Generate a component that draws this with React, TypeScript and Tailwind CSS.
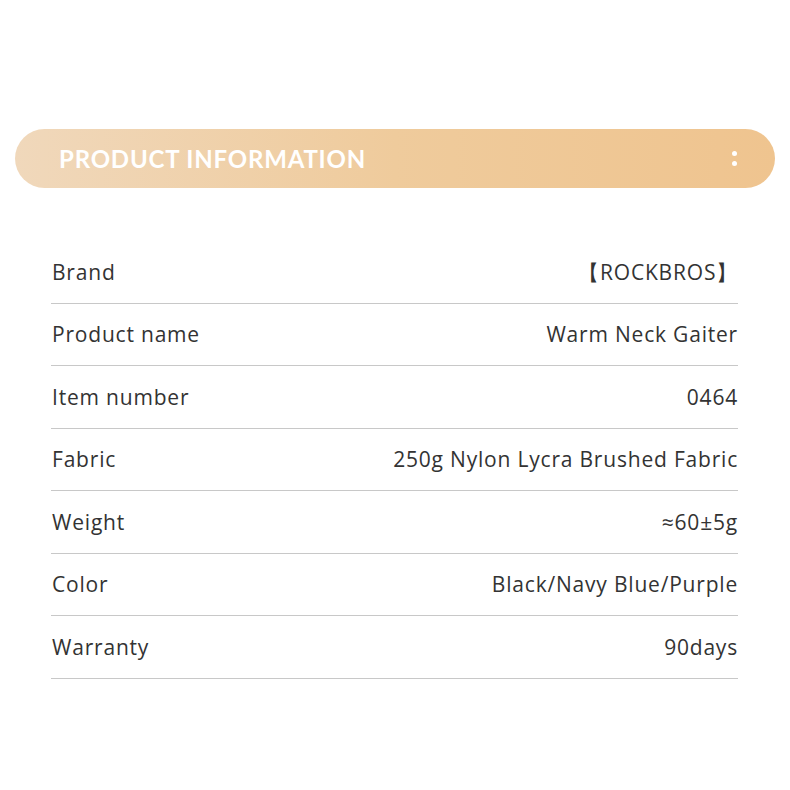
import React from 'react';

const rows: [string, string][] = [
  ['Brand', '【ROCKBROS】'],
  ['Product name', 'Warm Neck Gaiter'],
  ['Item number', '0464'],
  ['Fabric', '250g Nylon Lycra Brushed Fabric'],
  ['Weight', '≈60±5g'],
  ['Color', 'Black/Navy Blue/Purple'],
  ['Warranty', '90days'],
];

export default function App() {
  return (
    <div className="w-[790px] h-[790px] bg-white pt-[129px]">
      <div className="mx-[15px] h-[59px] rounded-full bg-gradient-to-r from-[#f0d8bb] via-[#efcb9c] to-[#efc48f] flex items-center justify-between pl-[44px] pr-[38px]">
        <h1 className="text-white text-[24px] font-bold tracking-[0.8px] font-['Lato',sans-serif]">PRODUCT INFORMATION</h1>
        <div className="flex flex-col gap-[5px]">
          <span className="w-[5px] h-[5px] rounded-full bg-white" />
          <span className="w-[5px] h-[5px] rounded-full bg-white" />
        </div>
      </div>

      <div className="ml-[51px] w-[687px] mt-[53px] font-['Open_Sans',sans-serif]">
        {rows.map(([label, value]) => (
          <div
            key={label}
            className="flex items-center justify-between h-[62.5px] border-b border-[#c8c8c8] text-[21px] tracking-[0.8px] text-[#333333] pt-[1px]"
          >
            <span className="pl-[1px]">{label}</span>
            <span>{value}</span>
          </div>
        ))}
      </div>
    </div>
  );
}
